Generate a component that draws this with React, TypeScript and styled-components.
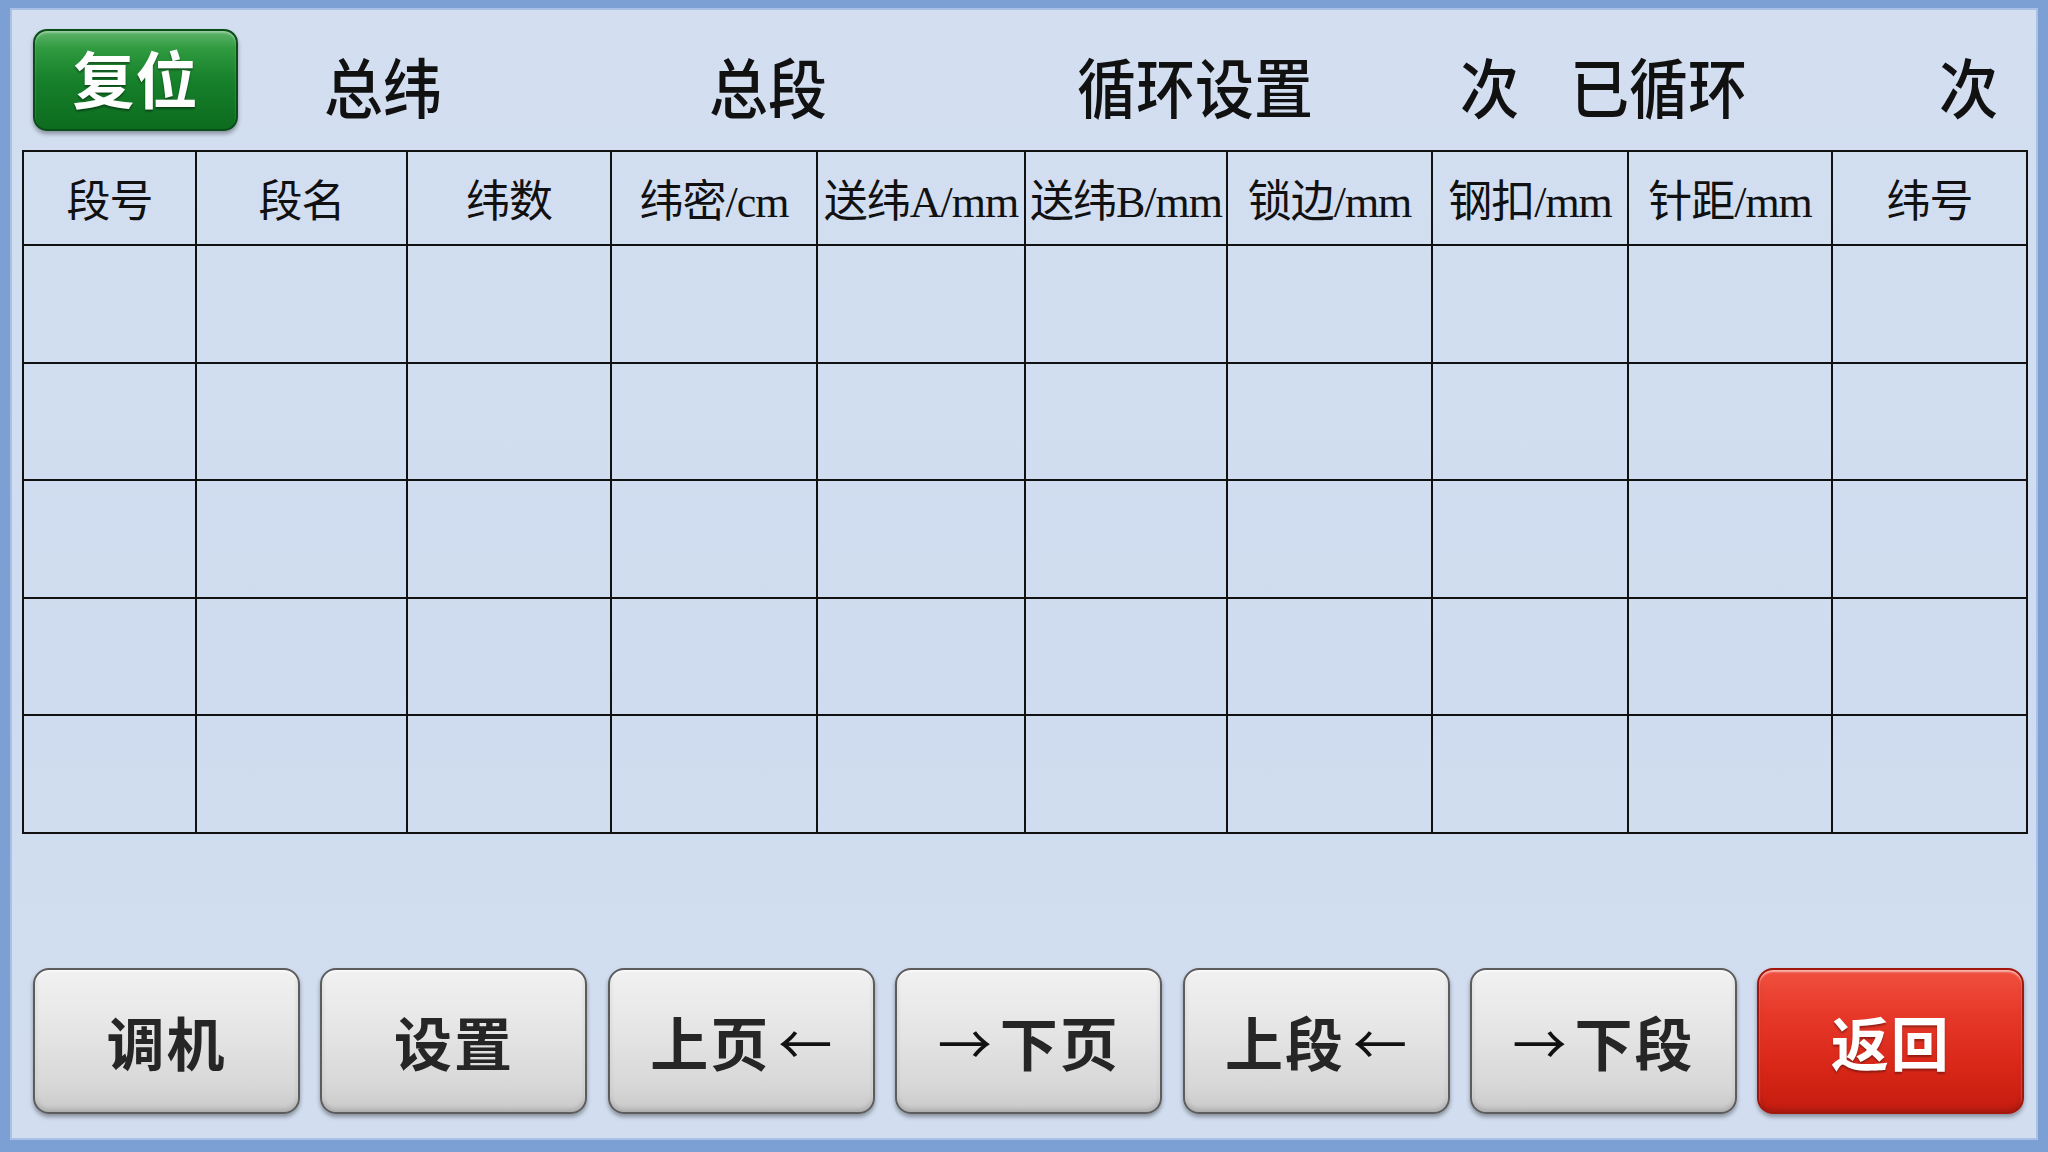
import React from 'react';
import styled, {createGlobalStyle} from 'styled-components';

const GlobalStyle = createGlobalStyle`
  html, body {
    margin: 0;
    padding: 0;
    background: #d0ddf0;
  }
  * {
    box-sizing: border-box;
  }
`;

const columns = [
    {title: '段号', width: 173},
    {title: '段名', width: 211},
    {title: '纬数', width: 204},
    {title: '纬密/cm', width: 206},
    {title: '送纬A/mm', width: 208},
    {title: '送纬B/mm', width: 202},
    {title: '锁边/mm', width: 205},
    {title: '钢扣/mm', width: 196},
    {title: '针距/mm', width: 204},
    {title: '纬号', width: 195},
];

const captions = [
    {text: '总纬', width: 385},
    {text: '总段', width: 368},
    {text: '循环设置', width: 383},
    {text: '次', width: 110},
    {text: '已循环', width: 369},
    {text: '次', width: 80},
];

const ROWS = 5;

const Panel = () => {
    return (
        <Screen>
            <GlobalStyle/>
            <TopBar>
                <ResetSlot>
                    <ResetButton>复位</ResetButton>
                </ResetSlot>
                {captions.map((c, i) => (
                    <Field key={i} $width={c.width}>
                        <Caption>{c.text}</Caption>
                    </Field>
                ))}
            </TopBar>

            <Grid>
                <colgroup>
                    {columns.map(c => <col key={c.title} style={{width: c.width}}/>)}
                </colgroup>
                <thead>
                <tr>
                    {columns.map(c => <HeadCell key={c.title}>{c.title}</HeadCell>)}
                </tr>
                </thead>
                <tbody>
                {Array.from({length: ROWS}).map((_, r) => (
                    <BodyRow key={r}>
                        {columns.map(c => <BodyCell key={c.title}/>)}
                    </BodyRow>
                ))}
                </tbody>
            </Grid>

            <ButtonRow>
                <KeyButton>调机</KeyButton>
                <KeyButton>设置</KeyButton>
                <KeyButton>上页<Arrow $side="right">←</Arrow></KeyButton>
                <KeyButton><Arrow $side="left">→</Arrow>下页</KeyButton>
                <KeyButton>上段<Arrow $side="right">←</Arrow></KeyButton>
                <KeyButton><Arrow $side="left">→</Arrow>下段</KeyButton>
                <KeyButton $variant="danger">返回</KeyButton>
            </ButtonRow>
        </Screen>
    );
};

export default Panel;

const Screen = styled.div`
  width: 2048px;
  height: 1152px;
  display: flex;
  flex-direction: column;
  background: linear-gradient(180deg, #d3dff1 0%, #cfdcef 60%, #d2def0 100%);
  border-style: solid;
  border-color: #7c9fd4;
  border-width: 8px 10px 12px 10px;
  box-shadow: inset 0 0 0 2px #a9c1e6;
  padding: 21px 10px 26px 12px;
  font-family: "Liberation Serif", "Noto Sans CJK SC", serif;
  color: #111;
  overflow: hidden;
`;

const TopBar = styled.div`
  display: flex;
  align-items: flex-start;
  height: 102px;
  padding-left: 11px;
`;

const ResetSlot = styled.div`
  width: 291px;
  flex: none;
`;

const ResetButton = styled.div`
  width: 205px;
  height: 102px;
  display: flex;
  align-items: center;
  justify-content: center;
  border-radius: 14px;
  border: 2px solid #0b4d1a;
  background: linear-gradient(180deg, #5fb46a 0%, #2f9a3f 18%, #17812b 50%, #0c6b1f 100%);
  box-shadow: 0 3px 4px rgba(0, 0, 0, 0.35), inset 0 2px 2px rgba(255, 255, 255, 0.35);
  color: #fff;
  font-family: "Noto Sans CJK SC", sans-serif;
  font-weight: 700;
  font-size: 62px;
  letter-spacing: 1px;
  text-shadow: 0 2px 2px rgba(0, 0, 0, 0.4);
  padding-bottom: 6px;
`;

const Field = styled.div<{ $width: number }>`
  width: ${p => p.$width}px;
  flex: none;
`;

const Caption = styled.div`
  margin-top: 20px;
  font-size: 59px;
  line-height: 66px;
  font-family: "Noto Sans CJK SC", serif;
  font-weight: 500;
  white-space: nowrap;
  transform: scaleY(1.1);
  transform-origin: top left;
`;

const Grid = styled.table`
  margin-top: 19px;
  width: 2004px;
  table-layout: fixed;
  border-collapse: collapse;
  border: 2px solid #111;
`;

const HeadCell = styled.th`
  height: 94px;
  padding: 0;
  border: 2px solid #111;
  font-family: "Liberation Serif", "Noto Sans CJK SC", serif;
  font-weight: 400;
  font-size: 44px;
  letter-spacing: -1px;
  white-space: nowrap;
  text-align: center;
  vertical-align: middle;
  overflow: visible;
`;

const BodyRow = styled.tr`
  height: 117.5px;
`;

const BodyCell = styled.td`
  padding: 0;
  border: 2px solid #111;
`;

const ButtonRow = styled.div`
  margin-top: auto;
  display: flex;
  gap: 20.4px;
  padding-left: 11px;
`;

const KeyButton = styled.div<{ $variant?: 'danger' }>`
  width: 267px;
  height: 146px;
  flex: none;
  display: flex;
  align-items: center;
  justify-content: center;
  border-radius: 16px;
  border: 2px solid ${p => p.$variant === 'danger' ? '#a3160c' : '#5c5c5c'};
  background: ${p => p.$variant === 'danger'
    ? 'linear-gradient(180deg, #f0503f 0%, #e7392a 30%, #d82617 70%, #c41c10 100%)'
    : 'linear-gradient(180deg, #f1f1f1 0%, #e6e6e6 40%, #d8d8d8 80%, #c9c9c9 100%)'};
  box-shadow: 0 3px 4px rgba(0, 0, 0, 0.35), inset 0 2px 2px rgba(255, 255, 255, 0.6), inset 0 -3px 4px rgba(0, 0, 0, 0.15);
  color: ${p => p.$variant === 'danger' ? '#fff' : '#262626'};
  font-family: "Noto Sans CJK SC", sans-serif;
  font-weight: 700;
  font-size: 58px;
  letter-spacing: 2px;
  text-shadow: ${p => p.$variant === 'danger' ? '0 2px 2px rgba(0,0,0,0.35)' : 'none'};
`;

const Arrow = styled.span<{ $side: 'left' | 'right' }>`
  font-family: "Noto Sans CJK SC", sans-serif;
  font-weight: 400;
  font-size: 54px;
  letter-spacing: 0;
  color: #111;
  margin-left: ${p => p.$side === 'right' ? '8px' : '0'};
  margin-right: ${p => p.$side === 'left' ? '8px' : '0'};
`;
